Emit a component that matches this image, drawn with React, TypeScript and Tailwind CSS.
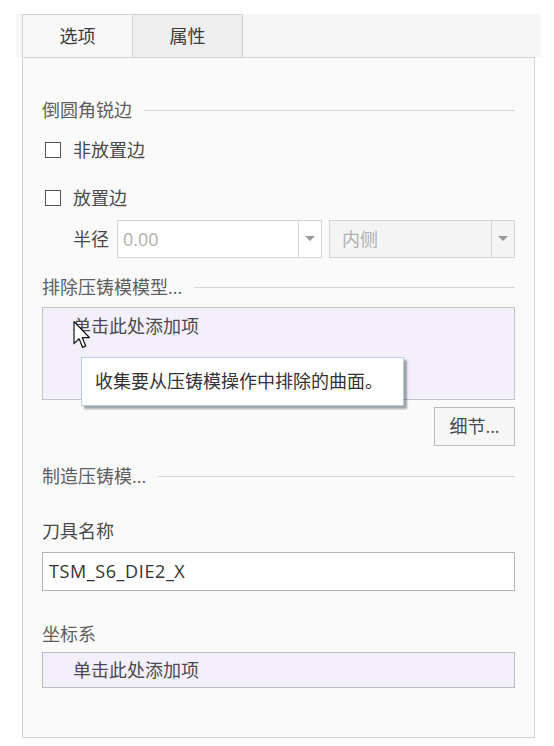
import React from 'react';

const font = "font-['Open_Sans','Noto_Sans_CJK_SC',sans-serif]";

function SectionHeading({ label }: { label: string }) {
  return (
    <div className="flex items-center h-6 gap-3">
      <span className="text-[18px] text-[#5e5e5e] leading-6 whitespace-nowrap">{label}</span>
      <div className="flex-1 h-px bg-[#d6d6d6]" />
    </div>
  );
}

function Checkbox({ label }: { label: string }) {
  return (
    <div className="flex items-center h-6 pl-[3px]">
      <div className="w-4 h-4 border border-[#555] bg-white" />
      <span className="ml-[12px] text-[18px] text-[#4a4a4a] leading-6">{label}</span>
    </div>
  );
}

function Arrow() {
  return (
    <svg width="10" height="6" viewBox="0 0 10 6">
      <path d="M0 0 L10 0 L5 5 Z" fill="#9a9a9a" />
    </svg>
  );
}

function Cursor() {
  return (
    <svg width="18" height="28" viewBox="0 0 13 21" className="absolute left-[30px] top-[13px]">
      <path
        d="M0.5 0.5 L0.5 17 L4.3 13.3 L7 19.8 L9.3 18.8 L6.7 12.4 L12 12.4 Z"
        fill="#fff"
        stroke="#111"
        strokeWidth="0.9"
        strokeLinejoin="round"
      />
    </svg>
  );
}

export default function App() {
  return (
    <div className={`w-[554px] h-[746px] bg-white ${font}`}>
      {/* Tab bar */}
      <div className="pt-[14px]">
        <div className="ml-4 w-[525px] h-[43px] bg-[#f6f6f6] flex items-stretch pl-[6px]">
          <div className="w-[111px] border-l border-r border-t border-[#d2d2d2] bg-[#f8f8f8] flex items-center justify-center text-[18px] text-[#3a3a3a]">
            选项
          </div>
          <div className="w-[110px] border-r border-t border-[#d2d2d2] bg-[#eeeeee] flex items-center justify-center text-[18px] text-[#3a3a3a]">
            属性
          </div>
        </div>
      </div>

      {/* Panel */}
      <div className="ml-[22px] w-[513px] h-[681px] border border-[#d2d2d2] bg-[#fafafa] px-[19px] pt-[40px]">
        <SectionHeading label="倒圆角锐边" />
        <div className="mt-4">
          <Checkbox label="非放置边" />
        </div>
        <div className="mt-6">
          <Checkbox label="放置边" />
        </div>

        <div className="mt-[10px] flex items-center h-[38px]">
          <span className="ml-[31px] w-[44px] text-[18px] text-[#4a4a4a]">半径</span>
          <div className="w-[205px] h-full border border-[#d4d4d4] bg-white flex">
            <div className="flex-1 flex items-center pl-[5px] text-[18px] text-[#b0b0b0]">0.00</div>
            <div className="w-[23px] border-l border-[#d4d4d4] flex items-center justify-center">
              <Arrow />
            </div>
          </div>
          <div className="ml-[7px] flex-1 h-full border border-[#d4d4d4] bg-[#f4f4f4] flex">
            <div className="flex-1 flex items-center pl-[12px] text-[18px] text-[#b0b0b0]">内侧</div>
            <div className="w-[23px] border-l border-[#d4d4d4] flex items-center justify-center">
              <Arrow />
            </div>
          </div>
        </div>

        <div className="mt-[17px]">
          <SectionHeading label="排除压铸模模型..." />
        </div>

        <div className="relative mt-2 h-[93px] border border-[#c4c4c4] bg-[#f3f0fb]">
          <div className="pl-[30px] pt-[6px] text-[18px] text-[#4a4a4a] leading-6">单击此处添加项</div>
          <Cursor />
          <div className="absolute left-[38px] top-[49px] w-[323px] h-[49px] border border-[#b9cde0] bg-white shadow-[3px_3px_2px_rgba(0,0,0,0.35)] flex items-center pl-[13px] text-[18px] text-[#333]">
            收集要从压铸模操作中排除的曲面。
          </div>
        </div>

        <div className="mt-[7px] flex justify-end">
          <div className="w-[81px] h-[39px] border border-[#bdbdbd] bg-[#f6f6f6] flex items-center justify-center text-[18px] text-[#4a4a4a]">
            细节...
          </div>
        </div>

        <div className="mt-[18px]">
          <SectionHeading label="制造压铸模..." />
        </div>

        <div className="mt-[31px] h-6 text-[18px] text-[#4a4a4a] leading-6">刀具名称</div>
        <div className="mt-[9px] h-[39px] border border-[#b4b4b4] bg-white flex items-center pl-[6px] text-[18px] text-[#333] tracking-[0.6px]">
          TSM_S6_DIE2_X
        </div>

        <div className="mt-[31px] h-6 text-[18px] text-[#5e5e5e] leading-6">坐标系</div>
        <div className="mt-[6px] h-[36px] border border-[#bdbdbd] bg-[#f3f0fb] flex items-center pl-[30px] text-[18px] text-[#4a4a4a]">
          单击此处添加项
        </div>
      </div>
    </div>
  );
}
